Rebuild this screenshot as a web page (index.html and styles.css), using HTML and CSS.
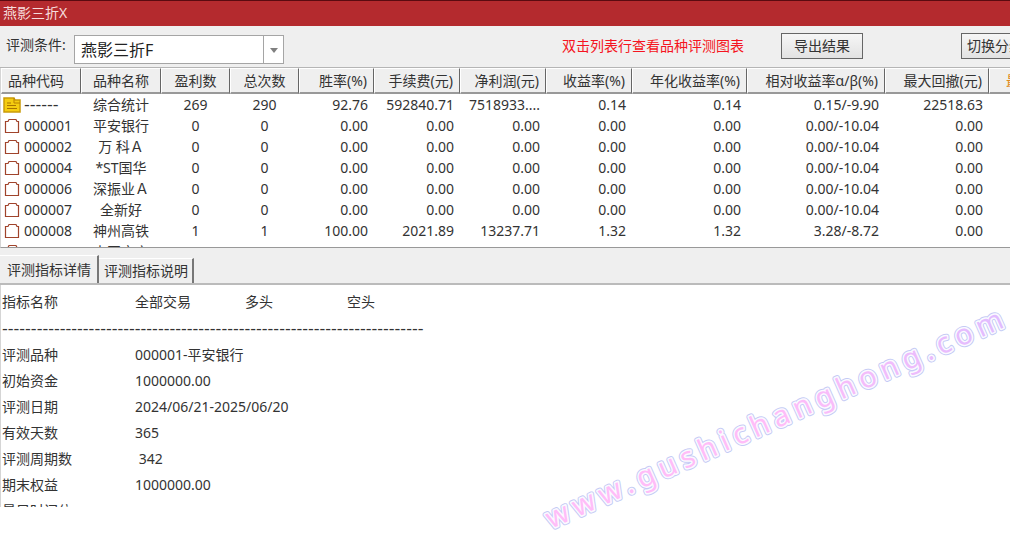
FILE: index.html
```html
<!DOCTYPE html>
<html lang="zh-CN">
<head>
<meta charset="UTF-8">
<meta name="viewport" content="width=device-width, initial-scale=1.0">
<title>燕影三折X</title>
<link rel="stylesheet" href="styles.css">
</head>
<body>
  <!-- Icons used in the code column -->
  <svg class="icon-defs" aria-hidden="true">
    <symbol id="icon-total" viewBox="0 0 18 16">
      <path d="M1 1h10l1 2h5v12H1z" fill="#f5cc10" stroke="#c99a08" stroke-width="1.5"/>
      <path d="M11 1v5h6" fill="none" stroke="#b98200"/>
      <path d="M4 6h4M4 8.500h9M4 11.500h10" stroke="#a87400" fill="none"/>
    </symbol>
    <symbol id="icon-stock" viewBox="0 0 16 16">
      <path d="M1.500 14.500V3.500H4L5 1.500h7l1 2h1.500v11z" fill="#fff" stroke="#a0432b" stroke-width="1.2"/>
    </symbol>
  </svg>

  <div class="window">
    <header class="title-bar">燕影三折X</header>

    <div class="toolbar">
      <label class="toolbar-label" for="condition">评测条件:</label>
      <div class="select-box">
        <select id="condition">
          <option>燕影三折F</option>
        </select>
      </div>
      <span class="hint">双击列表行查看品种评测图表</span>
      <button class="btn export-button" type="button">导出结果</button>
      <button class="btn switch-button" type="button">切换分组</button>
    </div>

    <div class="list-pane">
      <table class="result-table">
        <colgroup>
          <col class="col-code"><col class="col-name"><col class="col-count"><col class="col-count">
          <col class="col-win"><col class="col-money"><col class="col-money"><col class="col-money">
          <col class="col-year"><col class="col-alpha"><col class="col-draw"><col class="col-last">
        </colgroup>
        <thead>
          <tr>
            <th>品种代码</th><th>品种名称</th><th>盈利数</th><th>总次数</th><th>胜率(%)</th><th>手续费(元)</th><th>净利润(元)</th><th>收益率(%)</th><th>年化收益率(%)</th><th>相对收益率α/β(%)</th><th>最大回撤(元)</th><th class="sorted">最大</th>
          </tr>
        </thead>
        <tbody>
          <tr><td><svg class="icon icon-wide"><use href="#icon-total"/></svg><span class="dashes">------</span></td><td>综合统计</td><td>269</td><td>290</td><td>92.76</td><td>592840.71</td><td>7518933....</td><td>0.14</td><td>0.14</td><td>0.15/-9.90</td><td>22518.63</td><td></td></tr>
          <tr><td><svg class="icon"><use href="#icon-stock"/></svg>000001</td><td>平安银行</td><td>0</td><td>0</td><td>0.00</td><td>0.00</td><td>0.00</td><td>0.00</td><td>0.00</td><td>0.00/-10.04</td><td>0.00</td><td></td></tr>
          <tr><td><svg class="icon"><use href="#icon-stock"/></svg>000002</td><td>万 科Ａ</td><td>0</td><td>0</td><td>0.00</td><td>0.00</td><td>0.00</td><td>0.00</td><td>0.00</td><td>0.00/-10.04</td><td>0.00</td><td></td></tr>
          <tr><td><svg class="icon"><use href="#icon-stock"/></svg>000004</td><td>*ST国华</td><td>0</td><td>0</td><td>0.00</td><td>0.00</td><td>0.00</td><td>0.00</td><td>0.00</td><td>0.00/-10.04</td><td>0.00</td><td></td></tr>
          <tr><td><svg class="icon"><use href="#icon-stock"/></svg>000006</td><td>深振业Ａ</td><td>0</td><td>0</td><td>0.00</td><td>0.00</td><td>0.00</td><td>0.00</td><td>0.00</td><td>0.00/-10.04</td><td>0.00</td><td></td></tr>
          <tr><td><svg class="icon"><use href="#icon-stock"/></svg>000007</td><td>全新好</td><td>0</td><td>0</td><td>0.00</td><td>0.00</td><td>0.00</td><td>0.00</td><td>0.00</td><td>0.00/-10.04</td><td>0.00</td><td></td></tr>
          <tr><td><svg class="icon"><use href="#icon-stock"/></svg>000008</td><td>神州高铁</td><td>1</td><td>1</td><td>100.00</td><td>2021.89</td><td>13237.71</td><td>1.32</td><td>1.32</td><td>3.28/-8.72</td><td>0.00</td><td></td></tr>
          <tr><td><svg class="icon"><use href="#icon-stock"/></svg>000009</td><td>中国宝安</td><td>0</td><td>0</td><td>0.00</td><td>0.00</td><td>0.00</td><td>0.00</td><td>0.00</td><td>0.00/-10.04</td><td>0.00</td><td></td></tr>
        </tbody>
      </table>
    </div>

    <div class="tabs">
      <button class="tab active" type="button">评测指标详情</button>
      <button class="tab" type="button">评测指标说明</button>
    </div>

    <div class="detail-pane">
      <table class="detail-table">
        <thead>
          <tr><th class="detail-name">指标名称</th><th class="detail-all">全部交易</th><th class="detail-long">多头</th><th>空头</th></tr>
        </thead>
        <tbody>
          <tr><td colspan="4" class="divider"><span class="dashes">-------------------------------------------------------------------------</span></td></tr>
          <tr><td>评测品种</td><td colspan="3">000001-平安银行</td></tr>
          <tr><td>初始资金</td><td colspan="3">1000000.00</td></tr>
          <tr><td>评测日期</td><td colspan="3">2024/06/21-2025/06/20</td></tr>
          <tr><td>有效天数</td><td colspan="3">365</td></tr>
          <tr><td>评测周期数</td><td colspan="3">&nbsp;342</td></tr>
          <tr><td>期末权益</td><td colspan="3">1000000.00</td></tr>
          <tr><td>最早时间位</td><td colspan="3"></td></tr>
        </tbody>
      </table>
    </div>
    <svg class="watermark" viewBox="0 0 480 240" aria-hidden="true">
      <defs>
        <linearGradient id="pink" x1="0" x2="1">
          <stop offset="0.5" stop-color="#ffbdf8"/>
          <stop offset="1" stop-color="#e0bcff"/>
        </linearGradient>
      </defs>
      <g transform="translate(21 236) rotate(-24)">
        <text class="mark mark-edge">www.gushichanghong.com</text>
        <text class="mark mark-gap">www.gushichanghong.com</text>
        <text class="mark mark-fill">www.gushichanghong.com</text>
      </g>
    </svg>
  </div>
</body>
</html>
```

FILE: styles.css
```css
* {
  box-sizing: border-box;
}
body {
  margin: 0;
  font-family: "Noto Sans", "Noto Sans CJK SC", sans-serif;
  font-size: 14px;
  color: #333;
  background: #fff;
}
button, select {
  font: inherit;
  color: inherit;
}
.icon-defs {
  display: none;
}
.window {
  position: relative;
  display: flex;
  flex-direction: column;
  height: 100vh;
  padding-bottom: 26px;
  overflow: hidden;
}
.title-bar {
  height: 26px;
  padding-left: 3px;
  line-height: 24px;
  color: #f6dcdc;
  background: #b42a2e;
  border-top: 1px solid #5a0a10;
}

/* Toolbar */
.toolbar {
  display: flex;
  align-items: flex-start;
  height: 42px;
  padding: 7px 0 0 6px;
  background: #efefef;
  border-bottom: 1px solid #b5b5b5;
  overflow: hidden;
  white-space: nowrap;
}
.toolbar-label {
  width: 68px;
  line-height: 24px;
}
.select-box {
  position: relative;
  flex: none;
  width: 210px;
  height: 29px;
  margin-top: 2px;
}
.select-box select {
  width: 100%;
  height: 100%;
  padding: 0 6px;
  font-size: 16px;
  color: #222;
  background: #fff;
  border: 1px solid #a5a5a5;
  border-radius: 0;
  appearance: none;
}
/* Drop-down arrow cell */
.select-box::before {
  content: "";
  position: absolute;
  top: 0;
  right: 20px;
  height: 100%;
  border-left: 1px solid #a5a5a5;
}
.select-box::after {
  content: "";
  position: absolute;
  top: 13px;
  right: 6px;
  border: 4px solid transparent;
  border-top: 5px solid #808080;
  border-bottom: 0;
}
.hint {
  margin-left: auto;
  line-height: 26px;
  color: #f51420;
}
.btn {
  flex: none;
  height: 26px;
  padding: 0;
  line-height: 22px;
  background: linear-gradient(#f6f6f6, #e2e2e2);
  border: 1px solid #666;
  border-radius: 0;
}
.export-button {
  width: 82px;
  margin-left: 37px;
}
.switch-button {
  width: 68px;
  margin: 0 -19px 0 98px;
}

/* Result list */
.list-pane {
  flex: 9 1 0;
  min-height: 0;
  overflow: hidden;
  border-left: 1px solid #d5d5d5;
  border-bottom: 1px solid #999;
}
.result-table {
  width: 100%;
  table-layout: fixed;
  border-collapse: separate;
  border-spacing: 0;
  white-space: nowrap;
}
.col-code, .col-name { width: 80px; }
.col-count { width: 69px; }
.col-win { width: 75px; }
.col-money { width: 86px; }
.col-year { width: 115px; }
.col-alpha { width: 138px; }
.col-draw { width: 104px; }
.result-table th {
  height: 26px;
  padding: 0 6px;
  font-weight: normal;
  line-height: 22px;
  text-align: right;
  background: #efefef;
  border-top: 1px solid #fff;
  border-right: 1px solid #666;
  border-bottom: 2px solid #999;
  border-left: 1px solid #fff;
}
.result-table td {
  height: 21px;
  padding: 0 6px;
  line-height: 20px;
  text-align: right;
  overflow: hidden;
}
.result-table th:first-child {
  text-align: left;
}
.result-table td:first-child {
  padding: 0 0 0 2px;
  text-align: left;
}
.result-table th:nth-child(n+2):nth-child(-n+4),
.result-table td:nth-child(n+2):nth-child(-n+4) {
  padding: 0;
  text-align: center;
}
.result-table .sorted {
  padding: 0 0 0 16px;
  text-align: left;
  color: #e08a20;
  border-right: 0;
  overflow: hidden;
}
.icon {
  width: 16px;
  height: 16px;
  margin: -2px 4px 0 1px;
  vertical-align: middle;
}
.icon-wide {
  width: 18px;
  margin: -2px 3px 0 0;
}
/* Wider hyphens for the rule lines */
.dashes {
  font-family: "DejaVu Sans", sans-serif;
  font-size: 16px;
  line-height: 1;
}

/* Tabs */
.tabs {
  display: flex;
  align-items: flex-end;
  height: 37px;
  background: #efefef;
  border-bottom: 2px solid #bbb;
}
.tab {
  height: 25px;
  padding: 0 4px 0 5px;
  line-height: 24px;
  background: #efefef;
  border: 0;
  border-top: 1px solid #fff;
  border-right: 2px solid #777;
}
.tab.active {
  height: 28px;
  padding: 0 6px 0 7px;
}

/* Indicator details */
.detail-pane {
  flex: 11 1 0;
  min-height: 0;
  padding-top: 3px;
  overflow: hidden;
  border-left: 1px solid #d5d5d5;
}
.detail-table {
  border-spacing: 0;
  white-space: nowrap;
}
.detail-table th,
.detail-table td {
  height: 26px;
  padding: 0 0 0 1px;
  font-weight: normal;
  line-height: 26px;
  text-align: left;
}
.detail-table th,
.detail-table .divider {
  height: 27px;
}
.detail-name { min-width: 133px; }
.detail-all { min-width: 110px; }
.detail-long { min-width: 102px; }
.detail-table th:last-child { width: 100%; }

/* Watermark over the lower right corner */
.watermark {
  position: absolute;
  right: 0;
  bottom: 0;
  width: 480px;
  height: 240px;
  pointer-events: none;
}
.mark {
  font-family: "Noto Sans", sans-serif;
  font-size: 29px;
  letter-spacing: 6px;
  stroke-linejoin: round;
}
.mark-edge {
  fill: none;
  stroke: #c5cbf5;
  stroke-width: 5px;
}
.mark-gap {
  fill: none;
  stroke: #fbfaff;
  stroke-width: 3px;
}
.mark-fill {
  fill: url(#pink);
}
```
